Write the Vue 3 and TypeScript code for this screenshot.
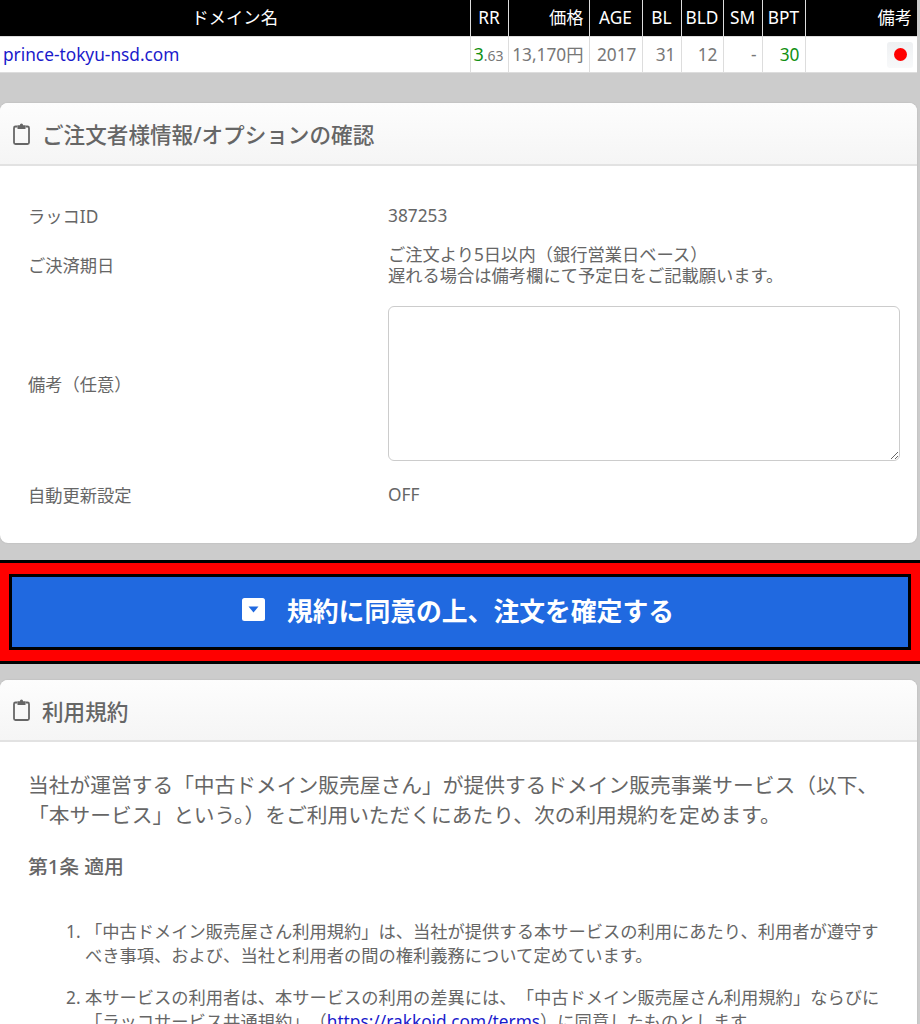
<template>
  <div class="page">
    <table class="domains">
      <colgroup>
        <col v-for="w in colWidths" :key="w.id" :style="{ width: w.px + 'px' }" />
      </colgroup>
      <thead>
        <tr>
          <th class="center">ドメイン名</th>
          <th class="center">RR</th>
          <th>価格</th>
          <th class="center">AGE</th>
          <th class="center">BL</th>
          <th class="center">BLD</th>
          <th class="center">SM</th>
          <th class="center">BPT</th>
          <th>備考</th>
        </tr>
      </thead>
      <tbody>
        <tr>
          <td class="left"><a href="#">prince-tokyu-nsd.com</a></td>
          <td class="rr"><span class="green big">3</span><span class="small">.63</span></td>
          <td>13,170円</td>
          <td>2017</td>
          <td>31</td>
          <td>12</td>
          <td>-</td>
          <td class="green">30</td>
          <td class="flag-cell"><span class="flag"><i></i></span></td>
        </tr>
      </tbody>
    </table>

    <section class="card first">
      <header class="card-head">
        <svg class="clip" viewBox="0 0 17 22" width="17" height="22">
          <path d="M4.500 3.500H2.500A1.500 1.500 0 0 0 1 5v14.500A1.500 1.500 0 0 0 2.500 21h12a1.500 1.500 0 0 0 1.500-1.500V5a1.500 1.500 0 0 0-1.500-1.500h-2" fill="none" stroke="#666" stroke-width="1.800" />
          <path d="M4.500 6V2.200h2.400a1.600 1.600 0 0 1 3.200 0h2.400V6z" fill="#666" />
        </svg>
        <h2>ご注文者様情報/オプションの確認</h2>
      </header>
      <dl class="info">
        <div class="row id-row">
          <dt>ラッコID</dt>
          <dd>387253</dd>
        </div>
        <div class="row limit-row">
          <dt>ご決済期日</dt>
          <dd>ご注文より5日以内（銀行営業日ベース）<br />遅れる場合は備考欄にて予定日をご記載願います。</dd>
        </div>
        <div class="row note-row">
          <dt>備考（任意）</dt>
          <dd><textarea></textarea></dd>
        </div>
        <div class="row auto-row">
          <dt>自動更新設定</dt>
          <dd>OFF</dd>
        </div>
      </dl>
    </section>

    <div class="confirm">
      <button class="confirm-btn" type="button">
        <svg viewBox="0 0 23 23" width="23" height="23">
          <rect width="23" height="23" rx="2.500" fill="#fff" />
          <path d="M6.500 8.500h10l-5 6z" fill="#2069e0" />
        </svg>
        <span>規約に同意の上、注文を確定する</span>
      </button>
    </div>

    <section class="card terms">
      <header class="card-head">
        <svg class="clip" viewBox="0 0 17 22" width="17" height="22">
          <path d="M4.500 3.500H2.500A1.500 1.500 0 0 0 1 5v14.500A1.500 1.500 0 0 0 2.500 21h12a1.500 1.500 0 0 0 1.500-1.500V5a1.500 1.500 0 0 0-1.500-1.500h-2" fill="none" stroke="#666" stroke-width="1.800" />
          <path d="M4.500 6V2.200h2.400a1.600 1.600 0 0 1 3.200 0h2.400V6z" fill="#666" />
        </svg>
        <h2>利用規約</h2>
      </header>
      <div class="terms-body">
        <p class="lead">当社が運営する「中古ドメイン販売屋さん」が提供するドメイン販売事業サービス（以下、「本サービス」という。）をご利用いただくにあたり、次の利用規約を定めます。</p>
        <h3>第1条 適用</h3>
        <ol>
          <li>「中古ドメイン販売屋さん利用規約」は、当社が提供する本サービスの利用にあたり、利用者が遵守すべき事項、および、当社と利用者の間の権利義務について定めています。</li>
          <li>本サービスの利用者は、本サービスの利用の差異には、「中古ドメイン販売屋さん利用規約」ならびに「ラッコサービス共通規約」（<a href="#">https://rakkoid.com/terms</a>）に同意したものとします。</li>
        </ol>
      </div>
    </section>
  </div>
</template>

<script setup lang="ts">
const colWidths = [
  { id: "domain", px: 470 },
  { id: "rr", px: 38 },
  { id: "price", px: 81 },
  { id: "age", px: 53 },
  { id: "bl", px: 39 },
  { id: "bld", px: 42 },
  { id: "sm", px: 39 },
  { id: "bpt", px: 43 },
  { id: "note", px: 112 }
]
</script>

<style>
html,
body {
  margin: 0;
  background: #ccc;
}
</style>

<style scoped>
.page {
  height: 1024px;
  overflow: hidden;
  font-family: "Noto Sans", "Noto Sans CJK JP", sans-serif;
  color: #666;
  background: #ccc;
}

.domains {
  width: 917px;
  table-layout: fixed;
  border-collapse: collapse;
  font-size: 17.280px;
  background: #fff;
}

.domains th {
  height: 36px;
  padding: 0 5px 0 0;
  background: #000;
  color: #fff;
  font-weight: 400;
  text-align: right;
  border-left: 1px solid #ddd;
  border-bottom: 1px solid #ddd;
  line-height: 1;
}

.domains th:first-child,
.domains td:first-child {
  border-left: 0;
}

.domains th.center {
  text-align: center;
  padding: 0;
}

.domains td {
  height: 35px;
  padding: 0 5px 0 0;
  text-align: right;
  border-left: 1px solid #ddd;
  color: #777;
  line-height: 1;
  border-bottom: 1px solid #ddd;
}

.domains td.left {
  text-align: left;
  padding-left: 3px;
}

.domains td.rr {
  padding-right: 4px;
}

.domains td.flag-cell {
  padding-right: 4px;
}

.domains a {
  color: #1a1acb;
  text-decoration: none;
}

.domains .green {
  color: #129012;
}

.domains .big {
  font-size: 18px;
}

.domains .small {
  font-size: 14px;
}

.flag {
  display: inline-flex;
  align-items: center;
  justify-content: center;
  width: 26px;
  height: 26px;
  vertical-align: middle;
  border-radius: 3px;
  background: linear-gradient(#eef0f2, #f8f9fa);
}

.flag i {
  width: 13px;
  height: 13px;
  border-radius: 50%;
  background: #f00;
}

.card {
  width: 917px;
  background: #fff;
  border-radius: 8px;
  overflow: hidden;
  box-shadow: 0 0 2px rgba(0, 0, 0, 0.12);
}

.card.first {
  margin-top: 30px;
  height: 440px;
}

.card-head {
  display: flex;
  align-items: center;
  height: 63px;
  padding-left: 13px;
  gap: 12px;
  background: linear-gradient(#fdfdfd, #f5f5f5);
  border-bottom: 2px solid #e2e2e2;
  box-sizing: border-box;
}

.terms .card-head {
  height: 62px;
}

.card-head h2 {
  margin: 0;
  font-size: 21.600px;
  font-weight: 500;
  color: #666;
}

.info {
  margin: 0;
  padding: 24px 17px 0 28px;
  font-size: 17.280px;
  color: #666;
}

.row {
  display: grid;
  grid-template-columns: 360px 1fr;
  align-items: center;
}

.row dt {
  font-weight: 400;
}

.row dd {
  margin: 0;
  line-height: 21px;
}

.id-row {
  height: 50px;
}

.limit-row {
  height: 49px;
}

.note-row {
  height: 188px;
}

.auto-row {
  height: 34px;
}

textarea {
  display: block;
  width: 100%;
  height: 155px;
  box-sizing: border-box;
  border: 1px solid #ccc;
  border-radius: 6px;
  background: #fff;
  resize: both;
}

.confirm {
  margin-top: 17px;
  padding: 11px 9px;
  border-top: 3px solid #000;
  border-bottom: 3px solid #000;
  background: #f00;
}

.confirm-btn {
  display: flex;
  align-items: center;
  justify-content: center;
  gap: 22px;
  width: calc(100% - 10px);
  height: 65px;
  padding: 0 4px 5px 0;
  border: 3px solid #000;
  background: #2069e0;
  color: #fff;
  font-family: inherit;
  font-size: 25.800px;
  font-weight: 700;
  box-sizing: content-box;
}

.card.terms {
  margin-top: 16px;
}

.terms-body {
  padding: 28px 28px 0;
  font-size: 20.740px;
  line-height: 30px;
  color: #666;
}

.lead {
  margin: 0;
}

h3 {
  margin: 22px 0 0;
  font-size: 19.870px;
  font-weight: 500;
}

ol {
  margin: 38px 0 0;
  padding: 0 0 0 57px;
  font-size: 17.280px;
  line-height: 24px;
  text-spacing-trim: space-all;
}

li {
  margin-bottom: 18px;
}

ol a {
  color: #1a1acb;
  text-decoration: none;
}
</style>
